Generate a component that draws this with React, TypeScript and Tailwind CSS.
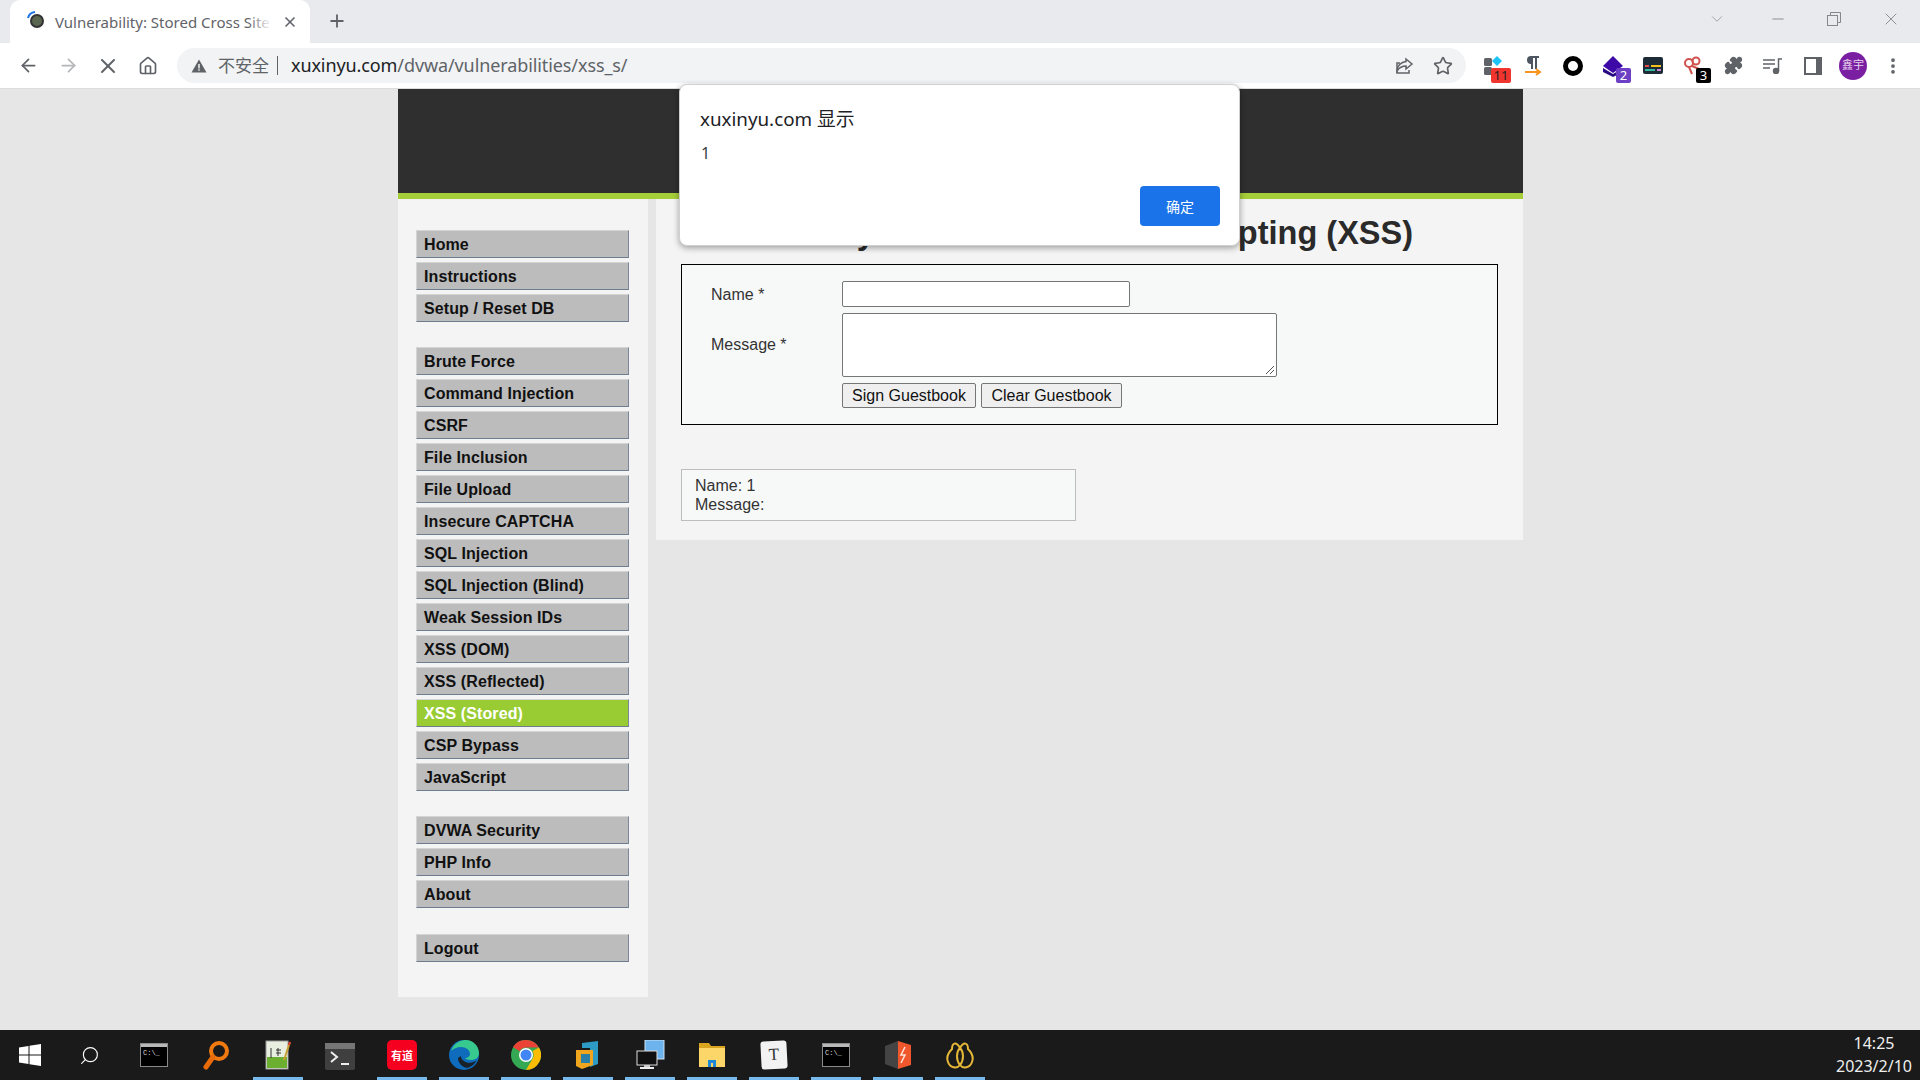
import { Fragment } from "react";
import { ArrowLeft, ArrowRight, House, Plus, Star, X, EllipsisVertical, Puzzle, ChevronDown, Minus, Search } from "lucide-react";

const menuGroups = [
  ["Home", "Instructions", "Setup / Reset DB"],
  ["Brute Force", "Command Injection", "CSRF", "File Inclusion", "File Upload", "Insecure CAPTCHA", "SQL Injection", "SQL Injection (Blind)", "Weak Session IDs", "XSS (DOM)", "XSS (Reflected)", "XSS (Stored)", "CSP Bypass", "JavaScript"],
  ["DVWA Security", "PHP Info", "About"],
  ["Logout"],
];

function Cmd() {
  return (
    <svg width="28" height="24" viewBox="0 0 28 24">
      <rect x="0.5" y="0.5" width="27" height="23" fill="#000" stroke="#8a8a8a" />
      <rect x="1" y="1" width="26" height="3" fill="#b9b9b9" />
      <text x="3" y="12" fontSize="7" fill="#ddd" fontFamily="Liberation Mono, monospace">C:\_</text>
    </svg>
  );
}

const taskIcons = [
  { key: "cmd1", icon: <Cmd />, run: false },
  {
    key: "search-orange",
    run: false,
    icon: (
      <svg width="30" height="30" viewBox="0 0 30 30">
        <circle cx="18" cy="11" r="8" fill="none" stroke="#f07a10" strokeWidth="4" />
        <path d="M12 17 L5 27" stroke="#e86a08" strokeWidth="5" strokeLinecap="round" />
      </svg>
    ),
  },
  {
    key: "notepad",
    run: true,
    icon: (
      <svg width="30" height="30" viewBox="0 0 30 30">
        <rect x="3" y="1" width="22" height="28" fill="#e8efe0" stroke="#9a9a9a" />
        <rect x="4" y="17" width="20" height="11" fill="#6cae2f" />
        <path d="M8 8v10M13 10h5M13 13h5M15 8v8" stroke="#333" strokeWidth="1" />
        <path d="M27 2 L21 20" stroke="#c8a032" strokeWidth="2" />
        <path d="M27 2 l-1 3" stroke="#d33" strokeWidth="2" />
      </svg>
    ),
  },
  {
    key: "ps",
    run: false,
    icon: (
      <svg width="30" height="30" viewBox="0 0 30 30">
        <rect x="0" y="3" width="30" height="27" rx="2" fill="#3f3f3f" />
        <rect x="0" y="3" width="30" height="6" fill="#767676" />
        <path d="M6 12l6 5-6 5" fill="none" stroke="#eee" strokeWidth="2" />
        <path d="M16 24h8" stroke="#eee" strokeWidth="2" />
      </svg>
    ),
  },
  {
    key: "youdao",
    run: true,
    icon: (
      <div className="flex h-[30px] w-[30px] items-center justify-center rounded-[5px] bg-[#f5001e] [font-family:'Noto_Sans_CJK_SC',sans-serif] text-[11px] leading-none font-bold text-white">
        有道
      </div>
    ),
  },
  {
    key: "edge",
    run: true,
    icon: (
      <svg width="30" height="30" viewBox="0 0 30 30">
        <circle cx="15" cy="15" r="15" fill="#0f6cbd" />
        <path d="M2 11C5 2 13 0 17 0c7 0 13 6 13 13 0 5-4 7-8 7-3 0-5-1-6-2 3 0 5-2 5-4 0-4-4-7-9-7-4 0-8 2-10 4z" fill="#37c98e" />
        <path d="M9 18c0 5 4 9 9 10 4-1 8-4 10-8-3 3-10 4-13 1-2-1-3-3-3-5z" fill="#1b1b1b" opacity="0.9" />
      </svg>
    ),
  },
  {
    key: "chrome",
    run: true,
    icon: (
      <svg width="30" height="30" viewBox="0 0 30 30">
        <circle cx="15" cy="15" r="15" fill="#34a853" />
        <path d="M15 0a15 15 0 0 1 13 7.5H15a7.5 7.5 0 0 0-6.5 3.8L2 7A15 15 0 0 1 15 0z" fill="#ea4335" />
        <path d="M28 7.500a15 15 0 0 1-13 22.500l6.500-11.200A7.500 7.500 0 0 0 21.500 11z" fill="#fbbc04" />
        <circle cx="15" cy="15" r="7" fill="#fff" />
        <circle cx="15" cy="15" r="5.500" fill="#4285f4" />
      </svg>
    ),
  },
  {
    key: "vbox",
    run: true,
    icon: (
      <svg width="30" height="30" viewBox="0 0 30 30">
        <path d="M9 3 L25 1 V24 L17 27 V8 H9z" fill="#2d9bc4" />
        <path d="M3 10 H20 V25 L9 29 L3 26z" fill="#f0a51e" />
        <rect x="8" y="14" width="9" height="9" fill="#2a7fa8" />
      </svg>
    ),
  },
  {
    key: "remote",
    run: true,
    icon: (
      <svg width="30" height="30" viewBox="0 0 30 30">
        <rect x="10" y="0" width="19" height="19" fill="#6db3ee" stroke="#cfe3f5" />
        <rect x="2" y="11" width="20" height="14" fill="#111" stroke="#ddd" />
        <rect x="9" y="25" width="6" height="2" fill="#ccc" />
        <rect x="5" y="27" width="14" height="2" fill="#eee" />
      </svg>
    ),
  },
  {
    key: "folder",
    run: true,
    icon: (
      <svg width="30" height="30" viewBox="0 0 30 30">
        <path d="M2 3 H12 L14 6 H28 V27 H2z" fill="#d9a520" />
        <rect x="2" y="8" width="26" height="19" fill="#fcd669" />
        <path d="M11 27 V20 H19 V27 H16 V23 H14 V27z" fill="#1e88d8" />
      </svg>
    ),
  },
  {
    key: "typora",
    run: true,
    icon: (
      <div className="flex h-[28px] w-[26px] rotate-[-3deg] items-center justify-center rounded-[3px] bg-[#f2f2f2] [font-family:'Liberation_Serif',serif] text-[17px] text-[#333]">
        T
      </div>
    ),
  },
  { key: "cmd2", icon: <Cmd />, run: true },
  {
    key: "sublime",
    run: true,
    icon: (
      <svg width="30" height="30" viewBox="0 0 30 30">
        <path d="M2 6 L15 1 V29 L2 24z" fill="#444" />
        <path d="M15 1 L28 5 V25 L15 29z" fill="#f0572c" />
        <path d="M22 7 L18 15 H22 L18 23" fill="none" stroke="#ffe5d8" strokeWidth="1.500" />
      </svg>
    ),
  },
  {
    key: "navicat",
    run: true,
    icon: (
      <svg width="30" height="30" viewBox="0 0 30 30" fill="none" stroke="#e6b838" strokeWidth="2">
        <path d="M15 8C11 1 7 3 7 9 3 13 1 17 3 22c2 6 9 7 12 3 3 4 10 3 12-3 2-5 0-9-4-13 0-6-4-8-8-1z" />
        <path d="M15 8C11 12 11 20 15 25 19 20 19 12 15 8z" />
      </svg>
    ),
  },
];

export default function App() {
  return (
    <div className="relative flex h-[1080px] w-[1920px] flex-col overflow-hidden bg-[#e6e6e6] [font-family:'Liberation_Sans','Noto_Sans_CJK_SC',sans-serif]">
      {/* tab strip */}
      <div className="flex h-[43px] shrink-0 bg-[#e8eaed] [font-family:'Noto_Sans','Noto_Sans_CJK_SC',sans-serif]">
        <div className="ml-[10px] flex h-[43px] w-[300px] items-center rounded-t-[10px] bg-white pr-[12px] pl-[16px]">
          <svg width="20" height="20" viewBox="0 0 20 20" className="shrink-0 -translate-y-[2px]">
            <circle cx="11" cy="11" r="6" fill="#5a6650" stroke="#333" strokeWidth="2" />
            <path d="M2 8 A8 8 0 0 1 9 2" fill="none" stroke="#1a73e8" strokeWidth="2" />
          </svg>
          <div className="relative ml-[9px] w-[217px]">
            <span className="text-[15px] whitespace-nowrap text-[#5f6368]">Vulnerability: Stored Cross Site</span>
            <span className="absolute top-0 right-0 h-full w-[24px] bg-gradient-to-r from-transparent to-white" />
          </div>
          <X className="ml-auto h-[16px] w-[16px] text-[#5f6368]" strokeWidth={2.5} />
        </div>
        <Plus className="mt-[11px] ml-[17px] h-[20px] w-[20px] text-[#5f6368]" strokeWidth={2.2} />
        <div className="ml-auto flex items-start">
          <ChevronDown className="mt-[10px] mr-[43px] h-[18px] w-[18px] text-[#9a9ca0]" strokeWidth={1.2} />
          <Minus className="mt-[10px] mr-[40px] h-[18px] w-[18px] text-[#85878b]" strokeWidth={1.2} />
          <svg width="14" height="14" viewBox="0 0 14 14" fill="none" stroke="#85878b" className="mt-[12px] mr-[40px]">
            <rect x="0.500" y="3.500" width="10" height="10" />
            <path d="M3.500 3.500V0.500H13.500V10.500H10.500" />
          </svg>
          <X className="mt-[9px] mr-[19px] h-[20px] w-[20px] text-[#85878b]" strokeWidth={1.1} />
        </div>
      </div>

      {/* toolbar */}
      <div className="flex h-[46px] shrink-0 items-start border-b border-[#dadce0] bg-white pl-[8px] [font-family:'Noto_Sans','Noto_Sans_CJK_SC',sans-serif]">
        <div className="flex h-[45px] w-[40px] items-center justify-center"><ArrowLeft className="h-[21px] w-[21px] text-[#5f6368]" strokeWidth={2} /></div>
        <div className="flex h-[45px] w-[40px] items-center justify-center"><ArrowRight className="h-[21px] w-[21px] text-[#b4b6b9]" strokeWidth={2} /></div>
        <div className="flex h-[45px] w-[40px] items-center justify-center"><X className="h-[24px] w-[24px] text-[#5f6368]" strokeWidth={2} /></div>
        <div className="flex h-[45px] w-[40px] items-center justify-center"><House className="h-[20px] w-[20px] text-[#5f6368]" strokeWidth={2} /></div>
        <div className="mt-[5px] ml-[9px] flex h-[35px] w-[1289px] items-center rounded-full bg-[#f1f3f4] pl-[14px]">
          <svg width="16" height="16" viewBox="0 0 16 16"><path d="M8 1.500 L15.500 14.500 H0.500z" fill="#5f6368" /><rect x="7.300" y="6" width="1.400" height="4.500" fill="#fff" /><rect x="7.300" y="11.300" width="1.400" height="1.400" fill="#fff" /></svg>
          <span className="ml-[11px] text-[17px] whitespace-nowrap text-[#5f6368]">不安全</span>
          <span className="ml-[8px] h-[19px] w-px bg-[#5f6368]" />
          <span className="ml-[13px] -translate-y-px text-[18px] leading-none tracking-[-0.1px] whitespace-nowrap text-[#202124]">
            xuxinyu.com<span className="text-[#5f6368]">/dvwa/vulnerabilities/xss_s/</span>
          </span>
          <svg width="20" height="20" viewBox="0 0 20 20" fill="none" stroke="#5f6368" strokeWidth="1.500" className="ml-auto">
            <path d="M12 3l6 5-6 5v-3C8 10 5 12 3 15c0-5 4-9 9-9.500z" />
            <path d="M15 14v3H3V7h3" />
          </svg>
          <Star className="mr-[13px] ml-[19px] h-[20px] w-[20px] text-[#5f6368]" strokeWidth={2} />
        </div>
        <div className="ml-[7px] flex h-[45px] items-center">
          <div className="relative flex h-[45px] w-[40px] items-center justify-center">
            <svg width="20" height="20" viewBox="0 0 20 20">
              <rect x="1" y="2" width="8" height="8" rx="1.500" fill="#5f6368" />
              <rect x="1" y="11" width="8" height="8" rx="1.500" fill="#5f6368" />
              <path d="M14 0l5 5-5 5-5-5z" fill="#1cc4f8" />
            </svg>
            <span className="absolute top-[25px] right-[2px] flex h-[15px] w-[20px] items-center justify-center rounded-[2px] bg-[#f0352f] text-[13px] leading-none text-[#222]">11</span>
          </div>
          <div className="flex h-[45px] w-[40px] items-center justify-center">
            <svg width="18" height="22" viewBox="0 0 18 22">
              <path d="M7 1H15V3H13V14H11V3H9V14H7V9A4 4 0 0 1 7 1z" fill="#4c5560" />
              <path d="M1 17H15M12 14l4 3-4 3" fill="none" stroke="#f7941d" strokeWidth="2" />
            </svg>
          </div>
          <div className="flex h-[45px] w-[40px] items-center justify-center">
            <div className="h-[20px] w-[20px] rounded-full border-[5px] border-black" />
          </div>
          <div className="relative flex h-[45px] w-[40px] items-center justify-center">
            <svg width="22" height="22" viewBox="0 0 22 22">
              <path d="M1 13l10 6 10-6v4l-10 5-10-5z" fill="#2a0a85" />
              <path d="M11 1l10 10-10 7L1 11z" fill="#3d0aa8" />
            </svg>
            <span className="absolute top-[25px] right-[2px] flex h-[15px] w-[15px] items-center justify-center rounded-[2px] bg-[#6d3fc4] text-[13px] leading-none text-white">2</span>
          </div>
          <div className="flex h-[45px] w-[40px] items-center justify-center">
            <svg width="20" height="17" viewBox="0 0 20 17">
              <rect width="20" height="17" rx="2" fill="#1c2b36" />
              <rect x="2" y="8" width="4" height="2" fill="#e0504a" />
              <rect x="8" y="8" width="10" height="2" fill="#f2c21b" />
              <rect x="2" y="12" width="10" height="2" fill="#35b8a0" />
              <rect x="14" y="12" width="4" height="2" fill="#c88ad0" />
            </svg>
          </div>
          <div className="relative flex h-[45px] w-[40px] items-center justify-center">
            <svg width="20" height="20" viewBox="0 0 20 20" fill="none" stroke="#d0524e" strokeWidth="2">
              <circle cx="6" cy="7" r="4" />
              <circle cx="13" cy="5" r="3.500" />
              <path d="M9 10l7 3M6 11l3 7" />
            </svg>
            <span className="absolute top-[25px] right-[2px] flex h-[15px] w-[15px] items-center justify-center rounded-[2px] bg-black text-[13px] leading-none text-white">3</span>
          </div>
          <div className="flex h-[45px] w-[40px] items-center justify-center"><Puzzle className="h-[19px] w-[19px] fill-[#5f6368] text-[#5f6368]" /></div>
          <div className="flex h-[45px] w-[40px] items-center justify-center">
            <svg width="20" height="16" viewBox="0 0 20 16" fill="none" stroke="#5f6368" strokeWidth="1.500">
              <path d="M0 2h12M0 6h12M0 10h7" />
              <circle cx="13" cy="13" r="2.500" fill="#5f6368" />
              <path d="M15.500 13V1H19" />
            </svg>
          </div>
          <div className="flex h-[45px] w-[40px] items-center justify-center">
            <div className="h-[18px] w-[18px] border-y-[2px] border-r-[6px] border-l-[2px] border-[#5f6368] bg-white" />
          </div>
          <div className="flex h-[45px] w-[40px] items-center justify-center">
            <div className="flex h-[28px] w-[28px] items-center justify-center rounded-full bg-[#7b1fa2] text-[11px] text-[#e7d3ee]">鑫宇</div>
          </div>
          <div className="flex h-[45px] w-[40px] items-center justify-center"><EllipsisVertical className="h-[20px] w-[20px] text-[#5f6368]" strokeWidth={2.5} /></div>
        </div>
      </div>

      {/* page */}
      <div className="min-h-0 flex-1 pl-[398px]">
        <div className="h-[110px] w-[1125px] border-b-[6px] border-[#a6ce39] bg-[#2f2f2f]" />
        <div className="flex w-[1125px] items-start">
          <nav className="flex h-[798px] w-[250px] flex-col gap-[25px] bg-[#f4f4f4] pt-[31px] pl-[18px]">
            {menuGroups.map((group, i) => (
              <div key={i} className={`flex flex-col gap-[4px] ${i === 3 ? "mt-px" : ""}`}>
                {group.map((item) => (
                  <div
                    key={item}
                    className={`h-[28px] w-[213px] border border-t-[#d4d4d4] border-r-[#7b8799] border-b-[#6f7b8f] border-l-[#d4d4d4] pl-[7px] text-[16px] leading-[28px] font-bold tracking-[0.1px] ${
                      item === "XSS (Stored)" ? "bg-[#99cc33] text-white" : "bg-[#bcbcbc] text-[#111]"
                    }`}
                  >
                    {item}
                  </div>
                ))}
              </div>
            ))}
          </nav>

          <main className="ml-[8px] h-[341px] w-[867px] bg-[#f4f4f4] pt-[16px] pl-[25px] text-[16px] text-[#333]">
            <h1 className="text-[32.500px] leading-[37px] font-bold whitespace-nowrap text-[#2a2a2a]">Vulnerability: Stored Cross Site Scripting (XSS)</h1>
            <div className="mt-[12px] flex h-[161px] w-[817px] border border-black bg-[#f7f9f9] pt-[16px]">
              <div className="w-[160px] pl-[29px]">
                <div className="h-[32px] leading-[28px]">Name *</div>
                <div className="mt-[20px]">Message *</div>
              </div>
              <div className="flex flex-col items-start">
                <div className="h-[26px] w-[288px] rounded-[2px] border border-[#767676] bg-white" />
                <div className="relative mt-[6px] h-[64px] w-[435px] rounded-[2px] border border-[#767676] bg-white">
                  <svg width="10" height="10" viewBox="0 0 10 10" className="absolute right-[1px] bottom-[1px]" stroke="#555">
                    <path d="M1 9L9 1M5 9L9 5" />
                  </svg>
                </div>
                <div className="mt-[6px] flex gap-[5px]">
                  <button className="h-[25px] w-[134px] rounded-[2px] border border-[#767676] bg-[#efefef] text-[16px] leading-none text-[#111]">Sign Guestbook</button>
                  <button className="h-[25px] w-[141px] rounded-[2px] border border-[#767676] bg-[#efefef] text-[16px] leading-none text-[#111]">Clear Guestbook</button>
                </div>
              </div>
            </div>
            <div className="mt-[44px] h-[52px] w-[395px] border border-[#bdbdbd] bg-[#f7f9f9] pt-[6px] pl-[13px] leading-[19px]">
              <Fragment>
                Name: 1<br />
                Message:
              </Fragment>
            </div>
          </main>
        </div>
      </div>

      {/* taskbar */}
      <div className="flex h-[50px] shrink-0 items-center bg-[#1a1a1a]">
        <div className="flex h-[50px] w-[60px] items-center justify-center">
          <svg width="22" height="22" viewBox="0 0 22 22" fill="#fff">
            <path d="M0 3.500L9.500 2V10.500H0zM10.500 1.800L22 0V10.500H10.500zM0 11.500H9.500V20L0 18.500zM10.500 11.500H22V22L10.500 20.200z" />
          </svg>
        </div>
        <div className="flex h-[50px] w-[63px] items-center justify-center pr-[4px]">
          <Search className="h-[21px] w-[21px] -scale-x-100 text-white" strokeWidth={1.3} />
        </div>
        {taskIcons.map((t) => (
          <div key={t.key} className="relative flex h-[50px] w-[62px] items-center justify-center">
            {t.icon}
            {t.run && <span className="absolute bottom-0 left-[6px] h-[3px] w-[50px] bg-[#76b9ed]" />}
          </div>
        ))}
        <div className="ml-auto flex w-[88px] flex-col items-center pr-[4px] [font-family:'Noto_Sans','Noto_Sans_CJK_SC',sans-serif] text-[16px] leading-[23px] text-[#eee]">
          <span>14:25</span>
          <span className="whitespace-nowrap">2023/2/10</span>
        </div>
      </div>

      {/* alert dialog */}
      <div className="absolute top-[84px] left-[679px] h-[162px] w-[561px] rounded-[8px] border border-[#d0d0d0] bg-white shadow-[0_2px_6px_rgba(0,0,0,0.35)] [font-family:'Noto_Sans','Noto_Sans_CJK_SC',sans-serif]">
        <div className="pt-[22px] pl-[20px] text-[18.800px] leading-[24px] text-[#202124]">xuxinyu.com 显示</div>
        <div className="mt-[11px] pl-[21px] text-[16px] leading-[22px] text-[#3c4043]">1</div>
        <button className="absolute right-[19px] bottom-[19px] h-[40px] w-[80px] rounded-[4px] bg-[#1a73e8] text-[14px] text-white">确定</button>
      </div>
    </div>
  );
}
